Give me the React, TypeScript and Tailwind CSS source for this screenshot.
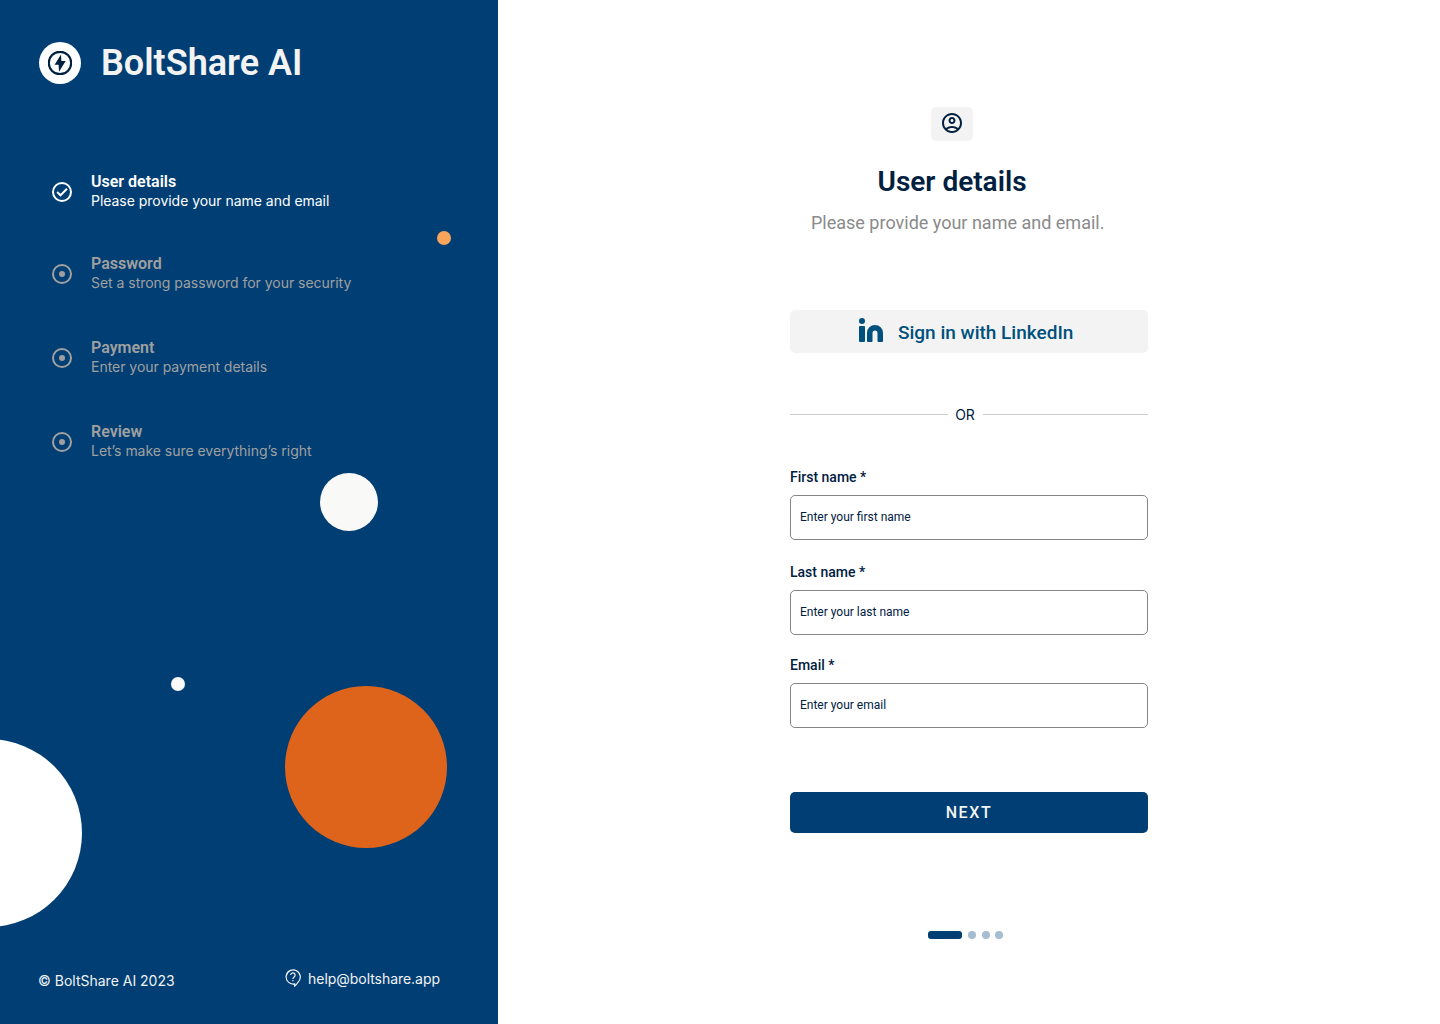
import { MdOutlineAccountCircle } from "react-icons/md";

const steps = [
  { title: "User details", text: "Please provide your name and email", active: true },
  { title: "Password", text: "Set a strong password for your security", active: false },
  { title: "Payment", text: "Enter your payment details", active: false },
  { title: "Review", text: "Let’s make sure everything’s right", active: false },
];

function BoltIcon() {
  return (
    <svg viewBox="0 0 24 24" className="size-6" fill="none">
      <circle cx="12" cy="12" r="11.2" stroke="currentColor" strokeWidth="2.2" />
      <path d="M13 3.400 6.600 13.700h4l.4 7.100 6.700-10.900h-4.300Z" fill="currentColor" />
    </svg>
  );
}

function StepMark({ done }: { done: boolean }) {
  return (
    <svg viewBox="0 0 24 24" className="size-6" fill="none">
      <circle cx="12" cy="12" r="9" stroke="currentColor" strokeWidth="2" />
      {done ? (
        <path d="m7.100 12 3.400 3.300 6.500-6.500" stroke="currentColor" strokeWidth="2" />
      ) : (
        <circle cx="12" cy="12" r="3" fill="currentColor" />
      )}
    </svg>
  );
}

function HelpIcon() {
  return (
    <svg viewBox="0 0 16 18" className="-mt-px mr-px h-[18px] w-4" fill="none" stroke="currentColor" strokeWidth="1.2">
      <path d="M9.700 17v-2.100a7.100 7.100 0 1 1 3.300-1.700c-.9 1.500-2 2.800-3.300 3.800Z" />
      <path d="M5.700 6.100a2.200 2.200 0 1 1 3.400 1.800c-.8.600-1.200 1-1.200 2" />
      <path d="M7.900 11v1.300" />
    </svg>
  );
}

function LinkedInIcon() {
  return (
    <svg viewBox="0 0 24 24" className="size-6" fill="currentColor">
      <circle cx="3" cy="3" r="3" />
      <path d="M0 9q0-1 1-1h4q1 0 1 1v14q0 1-1 1H1q-1 0-1-1Z" />
      <path d="M8 15a8 8 0 0 1 16 0v8q0 1-1 1h-3.500q-1 0-1-1v-8a2.500 2.500 0 0 0-5 0v8q0 1-1 1H9q-1 0-1-1Z" />
    </svg>
  );
}

function Field({ label, placeholder, className }: { label: string; placeholder: string; className: string }) {
  return (
    <label className={className}>
      <span className="block text-sm leading-4 font-medium">{label}</span>
      <input
        className="mt-2.5 block h-[45px] w-full rounded-[5px] border border-[#858585] pb-px pl-[9px] text-xs outline-none placeholder:text-[#00203f] placeholder:opacity-100"
        placeholder={placeholder}
      />
    </label>
  );
}

export default function App() {
  return (
    <div className="flex h-[1024px] w-[1440px] overflow-hidden bg-white font-['Roboto',sans-serif] text-[#00203f]">
      <aside className="relative flex h-full w-[498px] shrink-0 flex-col overflow-hidden bg-[#003e74] text-white">
        <div className="absolute top-[231px] left-[437px] size-3.5 rounded-full bg-[#f8a55b]" />
        <div className="absolute top-[473px] left-[320px] size-[58px] rounded-full bg-[#f9f9f8]" />
        <div className="absolute top-[677px] left-[171px] size-3.5 rounded-full bg-[#f9f9f8]" />
        <div className="absolute top-[686px] left-[285px] size-[162px] rounded-full bg-[#df641b]" />
        <div className="absolute top-[739px] left-[-106px] size-[188px] rounded-full bg-white" />

        <header className="mt-[42px] ml-[39px] flex h-[42px] items-center gap-5">
          <span className="flex size-[42px] items-center justify-center rounded-full bg-white text-[#00203f]">
            <BoltIcon />
          </span>
          <h1 className="text-4xl leading-[42px] font-semibold whitespace-nowrap text-[#f3f3f3]">BoltShare AI</h1>
        </header>

        <ol className="mt-[88px] ml-[50px] flex flex-col gap-11">
          {steps.map((s) => (
            <li
              key={s.title}
              className={
                s.active
                  ? "-mb-0.5 flex h-10 items-center gap-[17px]"
                  : "flex h-10 items-center gap-[17px] text-[#a0a0a0]"
              }
            >
              <StepMark done={s.active} />
              <div className="flex flex-col items-start pb-px">
                <span className="-mt-px text-base leading-5 font-semibold">{s.title}</span>
                <span className="-mt-px font-['Inter',sans-serif] text-sm leading-5 tracking-[-0.03px] whitespace-nowrap">
                  {s.text}
                </span>
              </div>
            </li>
          ))}
        </ol>

        <footer className="mt-auto mb-[33px] ml-[38px] flex h-5 w-[402px] justify-between font-['Inter',sans-serif] text-sm leading-5 text-[#f3f3f3]">
          <span>© BoltShare AI 2023</span>
          <span className="-mt-[5px] flex items-center gap-1.5">
            <HelpIcon />
            <span className="tracking-[-0.04px]">help@boltshare.app</span>
          </span>
        </footer>
      </aside>

      <main className="ml-[292px] flex w-[358px] flex-col">
        <span className="mt-[107px] ml-[141px] flex h-[34px] w-[42px] justify-center rounded-[5px] bg-[#f3f3f3] pt-1">
          <MdOutlineAccountCircle size={24} />
        </span>
        <h2 className="mt-6 ml-[87.5px] text-[28px] leading-[34px] font-semibold whitespace-nowrap">User details</h2>
        <p className="mt-3 ml-[21px] text-lg leading-6 whitespace-nowrap text-[#8a8a8a]">
          Please provide your name and email.
        </p>
        <button className="mt-[75px] flex h-[43px] items-start rounded-[5px] bg-[#f3f3f3] pl-[69px] text-[#00507d]">
          <span className="mt-2">
            <LinkedInIcon />
          </span>
          <span className="mt-[11px] ml-[15px] text-[19px] leading-6 font-medium whitespace-nowrap">
            Sign in with LinkedIn
          </span>
        </button>
        <div className="mt-[53px] flex h-[18px] items-center">
          <span className="mb-0.5 h-px w-[158px] bg-[#cccccc]" />
          <span className="w-[35px] pr-px text-center font-['Inter',sans-serif] text-sm leading-[18px]">OR</span>
          <span className="mb-0.5 h-px flex-1 bg-[#cccccc]" />
        </div>
        <Field className="mt-[45px]" label="First name *" placeholder="Enter your first name" />
        <Field className="mt-6" label="Last name *" placeholder="Enter your last name" />
        <Field className="mt-[22px]" label="Email *" placeholder="Enter your email" />
        <button className="mt-16 h-[41px] rounded-[5px] bg-[#003e74] text-base font-medium tracking-[1.6px] text-[#f3f3f3]">
          NEXT
        </button>
        <div className="mt-[98px] ml-[138px] flex h-2 items-center">
          <span className="h-2 w-[34px] rounded-[3px] bg-[#003e74]" />
          <span className="ml-1.5 size-2 rounded-full bg-[#a6bcd0]" />
          <span className="ml-1.5 size-2 rounded-full bg-[#a6bcd0]" />
          <span className="ml-[5px] size-2 rounded-full bg-[#a6bcd0]" />
        </div>
      </main>
    </div>
  );
}
